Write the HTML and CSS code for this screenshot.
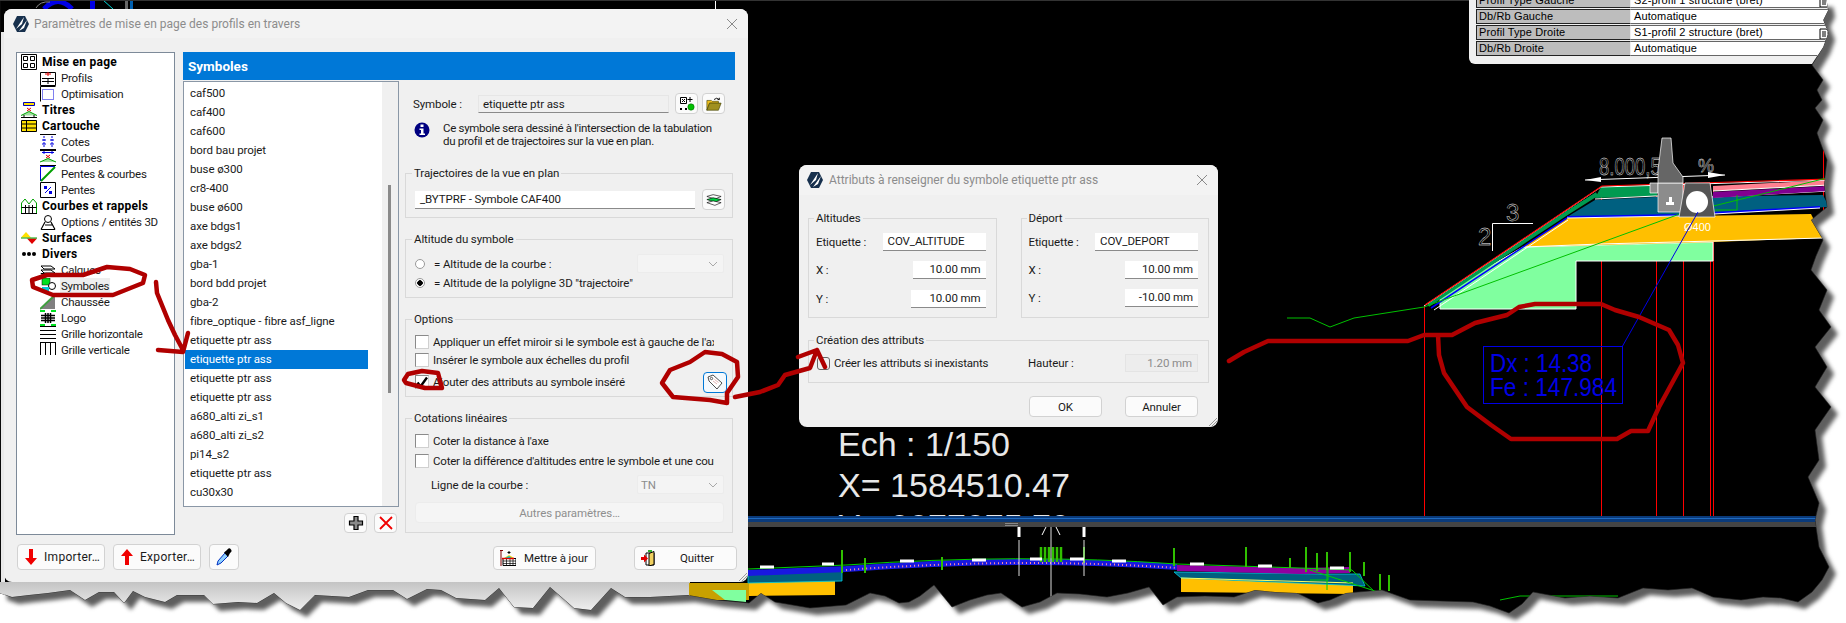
FILE: index.html
```html
<!DOCTYPE html>
<html lang="fr">
<head>
<meta charset="utf-8">
<title>Paramètres de mise en page</title>
<link rel="stylesheet" href="styles.css">
</head>
<body>
<svg class="cad" width="1846" height="623" viewBox="0 0 1846 623" xmlns="http://www.w3.org/2000/svg">
  <defs>
    <polygon id="tear" points="0,0 1826,0 1828,10 1823,20 1828,33 1823,47 1812,65 1823,80 1817,90 1822,100 1815,108 1823,120 1817,133 1822,147 1827,160 1824,185 1827,207 1811,220 1823,240 1816,256 1811,270 1827,290 1819,310 1831,327 1815,347 1827,367 1815,387 1831,407 1815,430 1819,460 1808,477 1819,503 1815,520 1819,547 1829,567 1822,580 1812,592 1798,602 1781,598 1763,597 1741,600 1713,597 1692,588 1668,590 1643,588 1618,598 1590,596 1565,598 1533,592 1522,604 1509,613 1490,606 1473,602 1440,601 1410,600 1382,590 1346,593 1330,600 1318,603 1297,593 1275,592 1255,590 1234,597 1205,596 1177,597 1163,605 1149,587 1128,593 1107,597 1080,594 1057,593 1040,602 1022,607 1001,593 987,595 970,600 952,607 934,585 920,596 909,602 899,603 885,596 870,593 846,605 810,608 775,602 761,593 749,603 717,600 688,595 650,597 625,597 611,588 591,610 574,608 550,587 533,608 514,607 499,588 485,600 456,598 441,590 427,589 407,599 393,590 368,590 349,597 315,595 300,610 286,603 274,593 257,603 238,602 213,604 204,595 177,595 165,602 145,597 133,591 124,603 114,592 99,592 85,600 70,590 48,593 29,595 12,597 0,593"/>
    <clipPath id="tearclip"><use href="#tear"/></clipPath>
    <clipPath id="yclip"><rect x="800" y="440" width="400" height="76"/></clipPath>
    <linearGradient id="shade" x1="0" y1="0" x2="0" y2="1">
      <stop offset="0" stop-color="#c4c4c4"/>
      <stop offset="1" stop-color="#f4f4f4"/>
    </linearGradient>
  </defs>
  <use href="#tear" class="tear-shadow"/>
  <use href="#tear" class="tear-fill"/>
  <g clip-path="url(#tearclip)">
    <rect x="1" y="32" width="4" height="570" fill="#e9e9e9"/>
    <rect x="0" y="582" width="690" height="32" fill="url(#shade)"/>

    <!-- fragments above the main window -->
    <path d="M44 9 Q58 -6 72 9" fill="none" stroke="#0000e6" stroke-width="5"/>
    <path d="M36 8 Q40 1 50 2" fill="none" stroke="#888" stroke-width="1"/>
    <rect x="90" y="0" width="5" height="9" fill="#0000e6"/>
    <path d="M103 0 L113 9" stroke="#00d8d8" stroke-width="1"/>
    <rect x="125" y="0" width="3" height="9" fill="#666"/>
    <rect x="130" y="0" width="3" height="9" fill="#0060b0"/>
    <rect x="715" y="0" width="1" height="9" fill="#fff"/>
    <rect x="0" y="0" width="1846" height="1" fill="#333"/>

    <!-- main profile -->
    <g fill="none" stroke="#f00" stroke-width="1">
      <path d="M1424.5 306V520M1601.5 187V520M1656.5 185V520M1683.5 183V520M1710.5 183V520M1713.5 190V520M1823.5 105V280"/>
    </g>
    <polygon points="1440,295 1440,309 1576,309 1576,261 1713,261 1713,242 1523,247" fill="#80ff9f" stroke="#fff" stroke-width="1"/>
    <polygon points="1523,247 1567,218 1811,214 1823,238 1713,242" fill="#ffbf00"/>
    <path d="M1523 247L1600 244L1713 241L1823 238" fill="none" stroke="#fff" stroke-width="1"/>
    <polygon points="1567,217 1595,200 1655,197 1823,195 1829,207 1679,215" fill="#006080"/>
    <path d="M1567 217L1679 215L1820 207" fill="none" stroke="#0000ff" stroke-width="2"/>
    <path d="M1567 218L1679 216L1820 208" fill="none" stroke="#fff" stroke-width="1"/>
    <polygon points="1595,198 1601,187 1657,184 1657,196" fill="#009a50"/>
    <path d="M1595 199L1655 196L1715 197L1829 191" fill="none" stroke="#fff" stroke-width="1"/>
    <polygon points="1713,192 1829,186 1829,191 1713,198" fill="#800090"/>
    <polygon points="1713,186 1829,180 1829,185 1713,191" fill="#ff8090"/>
    <path d="M1713 191L1829 185" stroke="#fff" stroke-width="1" fill="none"/>
    <path d="M1428 305L1567 213L1597 194" fill="none" stroke="#009a50" stroke-width="4"/>
    <path d="M1431 308L1567 218" fill="none" stroke="#0000ff" stroke-width="1.500"/>
    <path d="M1434 310L1568 220" fill="none" stroke="#fff" stroke-width="1"/>
    <path d="M1424 306L1601 187L1829 180" fill="none" stroke="#fff" stroke-width="1"/>
    <path d="M1425 305L1602 186L1829 179" fill="none" stroke="#f00" stroke-width="1.200"/>
    <path d="M1287 318H1310L1330 327L1354 318L1424 307L1677 215L1831 177" fill="none" stroke="#00c000" stroke-width="1"/>
    <path d="M1715 210H1737V195" fill="none" stroke="#00c000" stroke-width="1"/>

    <text x="1599" y="175" class="cad-dim" textLength="72" lengthAdjust="spacingAndGlyphs">8.000,50</text>
    <text x="1698" y="172" class="cad-dim-s">%</text>
    <path d="M1585 180L1725 175" stroke="#fff" stroke-width="1" fill="none"/>
    <path d="M1585 180L1601 177V182Z M1725 175L1708 172V178Z" fill="#fff"/>
    <text x="1506" y="221" class="cad-dim">3</text>
    <text x="1478" y="245" class="cad-dim">2</text>
    <path d="M1533 223.500H1492.500V251" stroke="#fff" fill="none"/>

    <!-- curb and pipe -->
    <polygon points="1650,183 1658,183 1658,193 1650,193" fill="#8c8c8c" stroke="#fff" stroke-width=".7"/>
    <polygon points="1658,183 1683,183 1683,212 1658,212" fill="#8c8c8c" stroke="#fff" stroke-width=".7"/>
    <path d="M1666 205h8v-3h-2v-5h-3v5h-3z" fill="#fff"/>
    <polygon points="1662,138 1671,138 1673,163 1683,177 1683,183 1658,183 1658,170" fill="#666" stroke="#fff" stroke-width=".7"/>
    <polygon points="1685,183 1710,183 1715,217 1679,217" fill="#555" stroke="#fff" stroke-width=".7"/>
    <ellipse cx="1697" cy="202" rx="11" ry="11" fill="#fff"/>
    <text x="1684" y="231" class="cad-pipe">Ø400</text>

    <!-- blue label -->
    <path d="M1698 212L1622 347" stroke="#0000e6" fill="none"/>
    <rect x="1483.500" y="346.500" width="139" height="57" fill="none" stroke="#0000e6"/>
    <text x="1490" y="372" class="cad-label" textLength="102" lengthAdjust="spacingAndGlyphs">Dx : 14.38</text>
    <text x="1490" y="396" class="cad-label" textLength="127" lengthAdjust="spacingAndGlyphs">Fe : 147.984</text>

    <!-- coordinates -->
    <text x="838" y="456" class="cad-coord" textLength="172" lengthAdjust="spacingAndGlyphs">Ech : 1/150</text>
    <text x="838" y="497" class="cad-coord" textLength="232" lengthAdjust="spacingAndGlyphs">X= 1584510.47</text>
    <g clip-path="url(#yclip)">
      <text x="838" y="538" class="cad-coord" textLength="232" lengthAdjust="spacingAndGlyphs">Y= 2277275.79</text>
    </g>

    <!-- pane splitter -->
    <rect x="740" y="516" width="1100" height="6" fill="#0a3a7a"/>
    <rect x="740" y="518" width="1100" height="1" fill="#1e6ac0"/>
    <rect x="740" y="522" width="1100" height="5" fill="#444"/>
    <rect x="1005" y="523" width="13" height="1" fill="#888"/>
    <rect x="1005" y="525" width="13" height="1" fill="#888"/>

    <!-- lower long section -->
    <polygon points="689,583 749,583 749,600 689,600" fill="#c8a000"/>
    <polygon points="749,582 835,580 835,595 749,596" fill="#ffbf00"/>
    <polygon points="1181,578 1353,585 1353,594 1181,592" fill="#ffbf00"/>
    <polygon points="712,590 746,590 746,602 725,600" fill="#80ff9f"/>
    <polygon points="748,574 842,570 842,581 748,583" fill="#006080" stroke="#00d0e0" stroke-width=".8"/>
    <polygon points="1174,572 1320,574 1360,574 1365,586 1181,578" fill="#006080" stroke="#00d0e0" stroke-width=".8"/>
    <path d="M748 573L846 569Q1020 556 1177 567" fill="none" stroke="#1818e0" stroke-width="6"/>
    <path d="M846 570Q1020 557 1177 568" fill="none" stroke="#ff90a0" stroke-width="2" stroke-dasharray="1 3"/>
    <path d="M1177 568L1300 571L1350 570" fill="none" stroke="#9000a0" stroke-width="6"/>
    <path d="M748 569L846 565Q1020 553 1177 564L1300 568L1352 570L1378 595" fill="none" stroke="#00d000" stroke-width="1"/>
    <path d="M1181 578L1353 583" fill="none" stroke="#ffff60" stroke-width="1"/>
    <path d="M1310 570L1378 592M1310 580H1328V570M1327 570V590" fill="none" stroke="#00d000" stroke-width="1"/>
    <path d="M842 550v23M865 558v15M942 557v13M1084 547v16M1174 548v18M1246 547v20M1290 558v10M1306 547v25M1317 553v18M1327 552v18M1350 552v20M1364 562v14M1380 574v18M1389 575v16" stroke="#30c000" stroke-width="2" fill="none"/>
    <path d="M1041 547v15M1045 547v15M1049 547v15M1053 547v15M1057 547v15M1061 547v15" stroke="#30c000" stroke-width="2.500" fill="none"/>
    <path d="M1019 527v10M1084 527v10" stroke="#fff" stroke-width="3" fill="none"/>
    <path d="M1019 540v36M1084 540v36M1051 527v100" stroke="#ddd" stroke-width="1" fill="none"/>
    <path d="M1046 527l-4 8M1056 527l4 8" stroke="#fff" stroke-width="1" fill="none"/>
    <path d="M760 567h14M822 564h12M900 561h14M972 560h14M1030 559h12M1070 559h14M1112 561h14M1190 564h14M1258 566h14M1330 568h14" stroke="#fff" stroke-width="3" fill="none"/>
    <path d="M1500 600L1520 596H1618" fill="none" stroke="#00c000" stroke-width="1"/>
  </g>
</svg>

<section class="win win-main">
  <header class="titlebar">
    <svg class="logo" viewBox="0 0 16 16"><path d="M4 0h8l4 8-4 8H4L0 8z" fill="#17304d"/><path d="M3 13L11 1L9 8ZM6 15L14 4L11 12Z" fill="#fff"/></svg>
    <span class="title">Paramètres de mise en page des profils en travers</span>
    <svg class="close" viewBox="0 0 12 12"><path d="M1 1L11 11M11 1L1 11" stroke="#8a8a8a" fill="none"/></svg>
  </header>
  <div class="main-body">
    <div class="left-col">
      <nav class="tree">
        <div class="node top"><svg class="ti" viewBox="0 0 16 16"><path d="M.5.500h15v15H.500z M2.500 2.500h4v4h-4z M9.500 2.500h4v4h-4z M2.500 9.500h4v4h-4z M9.500 9.500h4v4h-4z" fill="#fff" stroke="#000"/></svg><b>Mise en page</b></div>
        <div class="node sub"><svg class="ti" viewBox="0 0 16 16"><path d="M.5 2.500h15v13H.500z" fill="#fff" stroke="#000"/><path d="M2 8.500h12M2 11.500h12M8 8v6" stroke="#000"/><path d="M8 2v4M5 4h6" stroke="#e00000"/></svg><span>Profils</span></div>
        <div class="node sub"><svg class="ti" viewBox="0 0 16 16"><path d="M.5 15.500V.500h15" fill="none" stroke="#000"/><path d="M2.500 3.500h11v10h-11z" fill="none" stroke="#0000e0" stroke-dasharray="1 1"/></svg><span>Optimisation</span></div>
        <div class="node top"><svg class="ti" viewBox="0 0 16 16"><path d="M2.500.500h11v3h-11z" fill="#ffe000" stroke="#0000c0"/><path d="M6 6l4 3M10 6l-4 3" stroke="#e00000"/><path d="M0 13.500L8 9.500L16 13.500" fill="#9fe09f" stroke="#00a000"/><path d="M0 15.500h16M3 13v2M13 13v2" stroke="#000"/></svg><b>Titres</b></div>
        <div class="node top"><svg class="ti" viewBox="0 0 16 16"><path d="M.5 2.500h15v11H.500z" fill="#ffe000" stroke="#000"/><path d="M1 6h14M1 10h14M5.500 3v10" stroke="#000"/></svg><b>Cartouche</b></div>
        <div class="node sub"><svg class="ti" viewBox="0 0 16 16"><path d="M0 .5h16M0 15.500h16" stroke="#000"/><path d="M4 2v11M12 2v11" stroke="#0000e0" stroke-dasharray="2 1"/><path d="M2 6h4M10 6h4M2 10h4M10 10h4" stroke="#0000e0"/></svg><span>Cotes</span></div>
        <div class="node sub"><svg class="ti" viewBox="0 0 16 16"><path d="M0 .5h16M0 15.500h16" stroke="#000"/><path d="M2 2.500h12M4 1v3M12 1v3" stroke="#0000e0"/><path d="M6 5l4 3M10 5l-4 3" stroke="#e00000"/><path d="M0 12L8 8.500L16 12" fill="#9fe09f" stroke="#00a000"/></svg><span>Courbes</span></div>
        <div class="node sub"><svg class="ti" viewBox="0 0 16 16"><path d="M.5 15V.500H15" fill="none" stroke="#0000e0"/><path d="M1 15L15 1" stroke="#00a000" stroke-width="2"/></svg><span>Pentes &amp; courbes</span></div>
        <div class="node sub"><svg class="ti" viewBox="0 0 16 16"><path d="M.5.500h15v15H.500z" fill="#fff" stroke="#000"/><path d="M5 11L11 5" stroke="#0000e0"/><path d="M4 4h3v3h-3zM9 9h3v3h-3z" fill="#0000e0"/></svg><span>Pentes</span></div>
        <div class="node top"><svg class="ti" viewBox="0 0 16 16"><path d="M.5 15V5L4 1l4 5 4-5 3.500 4v10" fill="none" stroke="#00a000"/><path d="M.5 9.500h15M4.500 7v8M8 7v8M11.500 7v8" stroke="#000"/><path d="M0 15.500h16" stroke="#000"/></svg><b>Courbes et rappels</b></div>
        <div class="node sub"><svg class="ti" viewBox="0 0 16 16"><circle cx="8" cy="5" r="3.500" fill="none" stroke="#000"/><path d="M1 15.500h14M1 15.500L5 8M15 15.500L11 8M5 11h7" fill="none" stroke="#000" stroke-width="1.200"/></svg><span>Options / entités 3D</span></div>
        <div class="node top"><svg class="ti" viewBox="0 0 16 16"><path d="M0 7.500L5 2L10 7.500Z" fill="#ffe000"/><path d="M6 8.500h10L11 14Z" fill="#e00000"/><path d="M0 8h16" stroke="#00a000"/></svg><b>Surfaces</b></div>
        <div class="node top"><svg class="ti" viewBox="0 0 16 16"><circle cx="3" cy="8" r="2"/><circle cx="8" cy="8" r="2"/><circle cx="13" cy="8" r="2"/></svg><b>Divers</b></div>
        <div class="node sub"><svg class="ti" viewBox="0 0 16 16"><path d="M1 4h10l4 3H4zM1 8h10l4 3H4zM1 11.500h10l4 3H4z" fill="#fff" stroke="#000"/></svg><span>Calques</span></div>
        <div class="node sub"><svg class="ti" viewBox="0 0 16 16"><rect x="2" y="0" width="8" height="7" fill="#00e020" stroke="#000" stroke-width=".5"/><circle cx="12" cy="8" r="3.500" fill="#fff" stroke="#000"/><rect x="2" y="9" width="7" height="6" fill="#00c8d8"/></svg><span class="hl">Symboles</span></div>
        <div class="node sub"><svg class="ti" viewBox="0 0 16 16"><path d="M0 15L15 1V15Z" fill="#808080"/><path d="M0 15L15 1" stroke="#3f9f3f" stroke-width="2"/></svg><span>Chaussée</span></div>
        <div class="node sub"><svg class="ti" viewBox="0 0 16 16"><path d="M0 1h5M11 1h5M0 15h5M11 15h5" stroke="#00e020" stroke-width="2"/><path d="M1 5.500h14M1 8h14M1 10.500h14M5.500 3v10M8 3v10M10.500 3v10" stroke="#000" stroke-width="1.500"/></svg><span>Logo</span></div>
        <div class="node sub"><svg class="ti" viewBox="0 0 16 16"><path d="M0 .5h16M0 4.500h16M0 8.500h16M0 12.500h16" stroke="#000"/></svg><span>Grille horizontale</span></div>
        <div class="node sub"><svg class="ti" viewBox="0 0 16 16"><path d="M.5 0v13M5.500 0v13M10.500 0v13M15.500 0v13" stroke="#000"/><path d="M0 .5h16" stroke="#000"/></svg><span>Grille verticale</span></div>
      </nav>
      <div class="tools">
        <button class="btn btn-io"><svg class="bi" viewBox="0 0 12 16"><path d="M4 0h4v9h4l-6 7-6-7h4z" fill="#f00000"/></svg><span>Importer…</span></button>
        <button class="btn btn-io"><svg class="bi" viewBox="0 0 12 16"><path d="M4 16h4V7h4L6 0 0 7h4z" fill="#f00000"/></svg><span>Exporter…</span></button>
        <button class="btn btn-drop"><svg class="bi-drop" viewBox="0 0 16 18"><path d="M1 17L2 13L9 5L12 8L5 15Z" fill="#8fd0ff" stroke="#0030c0"/><path d="M8 4.500L11 2Q13 -1 15 1.500Q16.500 3.500 14 5L12 9Z" fill="#000"/></svg></button>
      </div>
    </div>
    <div class="right-col">
      <h1 class="section-head">Symboles</h1>
      <div class="split">
        <div class="list-col">
          <div class="list">
            <ul class="rows">
              <li>caf500</li><li>caf400</li><li>caf600</li><li>bord bau projet</li><li>buse ø300</li><li>cr8-400</li><li>buse ø600</li><li>axe bdgs1</li><li>axe bdgs2</li><li>gba-1</li><li>bord bdd projet</li><li>gba-2</li><li>fibre_optique - fibre asf_ligne</li><li>etiquette ptr ass</li><li class="sel">etiquette ptr ass</li><li>etiquette ptr ass</li><li>etiquette ptr ass</li><li>a680_alti zi_s1</li><li>a680_alti zi_s2</li><li>pi14_s2</li><li>etiquette ptr ass</li><li>cu30x30</li>
            </ul>
            <div class="scroll"><div class="thumb"></div></div>
          </div>
          <div class="list-actions">
            <button class="btn btn-sq"><svg class="bi-lg" viewBox="0 0 16 16"><path d="M6 1.500h4v4.500h4.500v4H10v4.500H6V10H1.500V6H6z" fill="#8a8a8a" stroke="#000" stroke-width="1.200"/></svg></button>
            <button class="btn btn-sq"><svg class="bi-lg" viewBox="0 0 16 16"><path d="M2 2L14 14M14 2L2 14" stroke="#f00000" stroke-width="1.800"/></svg></button>
          </div>
        </div>
        <div class="settings">
          <div class="symbol-row">
            <span class="symbol-label">Symbole :</span>
            <div class="field field-ro">etiquette ptr ass</div>
            <button class="btn btn-icon"><svg class="bi-lg" viewBox="0 0 16 16"><path d="M1.500 1.500h6v6h-6z" fill="#fff" stroke="#000"/><path d="M3 3l3 3M6 3L3 6" stroke="#000"/><path d="M11 1v5M8.500 3.500h5" stroke="#000"/><circle cx="12" cy="11" r="3.200" fill="#00c000" stroke="#006000" stroke-width=".5"/><rect x="1" y="12" width="2" height="2"/><rect x="6" y="12" width="2" height="2"/></svg></button>
            <button class="btn btn-icon"><svg class="bi-lg" viewBox="0 0 18 16"><path d="M1 4h5l1 1h7v2H4l-3 8z" fill="#f0c020" stroke="#404000" stroke-width=".7"/><path d="M1 15L4 7h13l-3 8z" fill="#a09020" stroke="#404000" stroke-width=".7"/><path d="M9 3q3-3 6 0M15 3V1M15 3h-2" fill="none" stroke="#000"/></svg></button>
          </div>
          <div class="info-row">
            <svg class="info-ico" viewBox="0 0 16 16"><circle cx="8" cy="8" r="7.500" fill="#000080"/><rect x="6.500" y="2.500" width="3" height="2.500" fill="#fff"/><path d="M5.500 6.500h4v5h1.500v1.500H5.500v-1.500H7V8H5.500z" fill="#fff"/></svg>
            <p class="info-text">Ce symbole sera dessiné à l'intersection de la tabulation<br>du profil et de trajectoires sur la vue en plan.</p>
          </div>
          <div class="groups">
            <fieldset class="grp grp-traj">
              <legend>Trajectoires de la vue en plan</legend>
              <div class="traj-row">
                <div class="field field-traj">_BYTPRF - Symbole CAF400</div>
                <button class="btn btn-icon"><svg class="bi-lg" viewBox="0 0 18 14"><path d="M1 3l7-2 9 2-7 3z" fill="#fff" stroke="#000" stroke-width=".7"/><path d="M1 6.500l7-2 9 2-7 3z" fill="#00d040" stroke="#000" stroke-width=".7"/><path d="M1 10l7-2 9 2-7 3z" fill="#fff" stroke="#000" stroke-width=".7"/></svg></button>
              </div>
            </fieldset>
            <fieldset class="grp grp-alt">
              <legend>Altitude du symbole</legend>
              <div class="alt-row">
                <span class="radio"></span><span class="opt">= Altitude de la courbe :</span>
                <div class="combo combo-push"><svg class="chev" viewBox="0 0 10 6"><path d="M1 1l4 4 4-4" fill="none" stroke="#a8a8a8"/></svg></div>
              </div>
              <div class="alt-row">
                <span class="radio on"></span><span class="opt">= Altitude de la polyligne 3D "trajectoire"</span>
              </div>
            </fieldset>
            <fieldset class="grp grp-opt">
              <legend>Options</legend>
              <label class="chk-row"><span class="chk"></span><span class="chk-text">Appliquer un effet miroir si le symbole est à gauche de l'axe</span></label>
              <label class="chk-row"><span class="chk"></span><span class="chk-text">Insérer le symbole aux échelles du profil</span></label>
              <div class="chk-row chk-last">
                <span class="chk"><svg class="tick" viewBox="0 0 12 12"><path d="M1.500 6.500L4.500 10.500L11 1.500" fill="none" stroke="#000" stroke-width="2.400"/></svg></span>
                <span class="chk-text chk-grow">Ajouter des attributs au symbole inséré</span>
                <button class="btn btn-tag"><svg class="bi-lg" viewBox="0 0 16 16"><path d="M1 3l5-2 9 8-5 6-8-8z" fill="#fff" stroke="#222" stroke-width=".8"/><circle cx="4.500" cy="4.500" r="1.200" fill="none" stroke="#222" stroke-width=".7"/><path d="M6 7l4 3M7.500 5.500l4 3" stroke="#d8a0a0" stroke-width=".8"/></svg></button>
              </div>
            </fieldset>
            <fieldset class="grp grp-cot">
              <legend>Cotations linéaires</legend>
              <label class="chk-row chk-roomy"><span class="chk"></span><span class="chk-text">Coter la distance à l'axe</span></label>
              <label class="chk-row chk-roomy"><span class="chk"></span><span class="chk-text">Coter la différence d'altitudes entre le symbole et une courbe</span></label>
              <div class="line-row">
                <span class="line-label">Ligne de la courbe :</span>
                <div class="combo"><span class="combo-val">TN</span><svg class="chev" viewBox="0 0 10 6"><path d="M1 1l4 4 4-4" fill="none" stroke="#a8a8a8"/></svg></div>
              </div>
              <button class="btn btn-other">Autres paramètres…</button>
            </fieldset>
          </div>
          <div class="foot-actions">
            <button class="btn btn-foot btn-update"><svg class="bi-lg" viewBox="0 0 16 16"><path d="M0 .5h3M1 0v16" stroke="#800000"/><path d="M3 8.500h13v7H3z" fill="#fff" stroke="#000"/><path d="M3 11h13M3 13.500h13M6.500 8v8M10 8v8M13 8v8" stroke="#000" stroke-width=".7"/><path d="M4 8L9 5l5 3z" fill="#ffd800"/><path d="M5 8l4-2 3 2z" fill="#00c0d0"/><path d="M2 8.500h12" stroke="#e00000" stroke-width="1.400"/><path d="M9 1v3M7.500 2.500h3" stroke="#000"/></svg><span>Mettre à jour</span></button>
            <button class="btn btn-foot btn-quit"><svg class="bi-lg" viewBox="0 0 16 16"><path d="M5 3h8v12H5z" fill="#fff" stroke="#000"/><path d="M8 3.500l5-2v13l-5 1.500z" fill="#f0d060" stroke="#000"/><rect x="7" y="0" width="4" height="2" fill="#30b030"/><path d="M0 7h3V4.500L7 8.500 3 12.500V10H0z" fill="#e00000"/></svg><span class="quit-label">Quitter</span></button>
          </div>
        </div>
      </div>
    </div>
  </div>
  <svg class="grip" viewBox="0 0 10 10"><path d="M9 1L1 9M9 4L4 9M9 7L7 9" stroke="#999" fill="none"/></svg>
</section>

<section class="win win-attr">
  <header class="titlebar titlebar-attr">
    <svg class="logo" viewBox="0 0 16 16"><path d="M4 0h8l4 8-4 8H4L0 8z" fill="#17304d"/><path d="M3 13L11 1L9 8ZM6 15L14 4L11 12Z" fill="#fff"/></svg>
    <span class="title">Attributs à renseigner du symbole etiquette ptr ass</span>
    <svg class="close" viewBox="0 0 12 12"><path d="M1 1L11 11M11 1L1 11" stroke="#8a8a8a" fill="none"/></svg>
  </header>
  <div class="attr-body">
    <div class="attr-pair">
      <fieldset class="grp grp-attr">
        <legend>Altitudes</legend>
        <div class="attr-row"><span>Etiquette :</span><div class="field f-name">COV_ALTITUDE</div></div>
        <div class="attr-row"><span>X :</span><div class="field f-num">10.00 mm</div></div>
        <div class="attr-row attr-row-y"><span>Y :</span><div class="field f-num f-wide">10.00 mm</div></div>
      </fieldset>
      <fieldset class="grp grp-attr">
        <legend>Déport</legend>
        <div class="attr-row"><span>Etiquette :</span><div class="field f-name">COV_DEPORT</div></div>
        <div class="attr-row"><span>X :</span><div class="field f-num">10.00 mm</div></div>
        <div class="attr-row"><span>Y :</span><div class="field f-num">-10.00 mm</div></div>
      </fieldset>
    </div>
    <fieldset class="grp grp-create">
      <legend>Création des attributs</legend>
      <div class="create-row">
        <div class="create-left"><span class="chk chk-round"></span><span>Créer les attributs si inexistants</span></div>
        <div class="create-right"><span>Hauteur :</span><div class="field f-num f-off">1.20 mm</div></div>
      </div>
    </fieldset>
    <div class="attr-actions">
      <button class="btn btn-dlg">OK</button>
      <button class="btn btn-dlg">Annuler</button>
    </div>
  </div>
  <svg class="grip" viewBox="0 0 10 10"><path d="M9 1L1 9M9 4L4 9M9 7L7 9" stroke="#999" fill="none"/></svg>
</section>

<section class="win-props">
  <div class="prop"><span class="prop-k">Profil Type Gauche</span><span class="prop-v">S2-profil 1 structure (bret)<svg class="prop-ico" viewBox="0 0 10 12"><path d="M1 2h6l2 2v8H1z" fill="#fff" stroke="#000"/><path d="M3 5h4M3 7h4M3 9h4" stroke="#000"/></svg></span></div>
  <div class="prop"><span class="prop-k">Db/Rb Gauche</span><span class="prop-v">Automatique</span></div>
  <div class="prop"><span class="prop-k">Profil Type Droite</span><span class="prop-v">S1-profil 2 structure (bret)<svg class="prop-ico" viewBox="0 0 10 12"><path d="M1 2h6l2 2v8H1z" fill="#fff" stroke="#000"/><path d="M3 5h4M3 7h4M3 9h4" stroke="#000"/></svg></span></div>
  <div class="prop"><span class="prop-k">Db/Rb Droite</span><span class="prop-v">Automatique</span></div>
</section>

<svg class="ink" width="1846" height="623" viewBox="0 0 1846 623" xmlns="http://www.w3.org/2000/svg">
  <g fill="none" stroke="#b00000" stroke-width="4.500" stroke-linejoin="round" stroke-linecap="round">
    <path d="M1229 361L1244 352L1268 341H1408L1424 335H1452L1475 323L1507 315L1519 307L1535 304H1601L1615 310L1639 317L1669 330L1678 345L1683 363L1671 385L1659 407L1648 431H1631L1617 439H1511L1491 425L1467 407L1444 373L1439 355L1438 335"/>
    <path d="M735 397L760 392L778 385L785 375L810 368L817 350M798 357L817 350L825 367"/>
    <path d="M705 352L722 354L737 362L738 377L727 393L727 403L710 400L673 397L662 383L670 370L690 362Z"/>
    <path d="M404 380L408 374L422 371L438 373L442 388L425 388L406 383Z"/>
    <path d="M32 280L47 275H83L107 267L130 269L145 275L143 283L113 295H53L33 287Z"/>
    <path d="M156 282L157 293L168 320L175 335L183 350M188 333L183 352L158 350"/>
  </g>
</svg>
</body>
</html>
```

FILE: styles.css
```css
* { box-sizing: border-box; }
html, body { margin: 0; padding: 0; }
body {
  width: 1846px;
  height: 623px;
  overflow: hidden;
  position: relative;
  background: #fff;
  font: 11.5px/16px Roboto, "Noto Sans", "Liberation Sans", sans-serif;
  letter-spacing: -.1px;
  color: #1a1a1a;
}
p, h1, ul { margin: 0; padding: 0; }
ul { list-style: none; }
button { font: inherit; color: inherit; padding: 0; letter-spacing: inherit; }

/* free canvas */
.cad, .ink { position: absolute; left: 0; top: 0; }
.ink { pointer-events: none; z-index: 5; }
.tear-shadow { fill: #5e5e5e; transform: translate(7px, 7px); filter: blur(2px); }
.tear-fill { fill: #000; stroke: #222; stroke-width: .6; }
.cad-coord { font: 34px "Liberation Sans", sans-serif; fill: #e8e8e8; letter-spacing: 0; }
.cad-label { font: 25px "Liberation Sans", sans-serif; fill: #0000e6; letter-spacing: 0; }
.cad-dim { font: 24px "Liberation Sans", sans-serif; fill: none; stroke: #fff; stroke-width: .4; letter-spacing: 0; }
.cad-dim-s { font: 18px "Liberation Sans", sans-serif; fill: none; stroke: #fff; stroke-width: .4; letter-spacing: 0; }
.cad-pipe { font: 11px "Liberation Sans", sans-serif; fill: #fff; letter-spacing: 0; }

/* windows */
.win {
  position: absolute;
  background: #f0f0f0;
  border-radius: 8px;
  overflow: hidden;
  z-index: 2;
}
.win-main { left: 4px; top: 9px; width: 744px; height: 573px; }
.win-attr { left: 799px; top: 165px; width: 419px; height: 262px; }
.titlebar {
  height: 29px;
  display: flex;
  align-items: center;
  padding: 0 10px 0 9px;
  background: #f3f3f3;
  gap: 5px;
}
.titlebar-attr { height: 30px; padding-left: 8px; gap: 6px; }
.logo { width: 16px; height: 16px; flex: none; }
.title { flex: 1; color: #8c8c8c; font-size: 12px; letter-spacing: 0; }
.close { width: 12px; height: 12px; flex: none; }
.grip { position: absolute; right: 0; bottom: 0; width: 10px; height: 10px; }

/* main window */
.main-body {
  display: grid;
  grid-template-columns: 159px 552px;
  column-gap: 8px;
  padding: 14px 0 0 12px;
}
.left-col { display: flex; flex-direction: column; }
.tree {
  height: 483px;
  background: #fff;
  border: 1px solid #7d8a99;
  padding-top: 1px;
  padding-left: 4px;
}
.node { height: 16px; display: flex; align-items: center; white-space: nowrap; }
.node .ti { width: 16px; height: 16px; flex: none; margin-right: 5px; }
.node.sub { padding-left: 19px; }
.node b { font-size: 12px; font-weight: 700; color: #000; letter-spacing: .25px; }
.node span { letter-spacing: -.25px; }
.hl { background: #eee; padding: 0 1px; margin-left: -1px; }
.tools { display: flex; gap: 8px; margin-top: 9px; padding-left: 1px; }
.btn {
  background: #fbfbfb;
  border: 1px solid #d2d2d2;
  border-radius: 4px;
  display: flex;
  align-items: center;
  white-space: nowrap;
  flex: none;
}
.btn-io { width: 88px; height: 26px; padding-left: 7px; gap: 7px; font-size: 12px; letter-spacing: .3px; }
.bi { width: 12px; height: 16px; flex: none; }
.bi-lg { width: 16px; height: 16px; flex: none; }
.bi-drop { width: 16px; height: 18px; flex: none; }
.btn-drop { width: 30px; height: 26px; justify-content: center; }

.section-head {
  height: 28px;
  background: #0078d7;
  color: #fff;
  font-size: 13.5px;
  font-weight: 700;
  line-height: 28px;
  padding-left: 5px;
  letter-spacing: 0;
}
.split { display: flex; }
.list-col { width: 216px; flex: none; margin-top: 1px; }
.list {
  height: 426px;
  background: #fff;
  border: 1px solid #8a97a6;
  display: flex;
  padding-left: 1px;
  overflow: hidden;
}
.rows { flex: 1; padding-top: 2px; margin-right: 14px; }
.rows li { height: 19px; line-height: 19px; padding-left: 5px; white-space: nowrap; }
.rows li.sel { background: #0078d7; color: #fff; }
.scroll { width: 16px; flex: none; background: #f0f0f0; padding: 103px 0 0 6px; }
.thumb { width: 3px; height: 208px; background: #8a8a8a; }
.list-actions { display: flex; justify-content: flex-end; gap: 7px; margin-top: 6px; padding-right: 2px; }
.btn-sq { width: 23px; height: 20px; justify-content: center; }

.settings { width: 332px; margin-left: 6px; flex: none; padding-top: 13px; }
.symbol-row { display: flex; align-items: center; height: 21px; padding-left: 8px; }
.symbol-label { width: 65px; flex: none; }
.field {
  background: #fff;
  border-bottom: 1px solid #8a8a8a;
  height: 18px;
  line-height: 17px;
  padding: 0 5px;
  white-space: nowrap;
  flex: none;
}
.field-ro { width: 191px; background: #f0f0f0; border: 1px solid #e6e6e6; border-bottom-color: #8a8a8a; padding-left: 4px; margin-right: 6px; }
.btn-icon { width: 23px; height: 21px; justify-content: center; }
.btn-icon + .btn-icon { margin-left: 4px; }
.info-row { display: flex; padding: 8px 0 0 9px; height: 51px; }
.info-ico { width: 16px; height: 16px; flex: none; margin: 0 13px 0 0; }
.info-text { line-height: 13px; white-space: nowrap; letter-spacing: -.3px; }
.groups { display: flex; flex-direction: column; gap: 13px; width: 328px; }
.grp { margin: 0; padding: 0; border: 1px solid #d9d9d9; min-width: 0; }
.grp legend { margin-left: -3px; padding: 0 2px; line-height: 16px; }
.grp-traj { height: 53px; padding: 8px 7px 0 9px; }
.traj-row { display: flex; align-items: center; justify-content: space-between; }
.field-traj { width: 280px; }
.grp-alt { height: 67px; padding: 7px 8px 0 9px; }
.alt-row { display: flex; align-items: center; height: 19px; }
.radio { width: 10px; height: 10px; border-radius: 50%; background: #fff; border: 1px solid #9a9a9a; margin-right: 9px; flex: none; }
.radio.on { background: radial-gradient(circle, #000 0 2.5px, #fff 3px); }
.opt { white-space: nowrap; }
.combo { width: 87px; height: 19px; background: #f4f4f4; border: 1px solid #ececec; border-radius: 2px; display: flex; align-items: center; padding: 0 5px 0 3px; flex: none; }
.combo-push { margin-left: auto; }
.combo-val { flex: 1; color: #8c8c8c; }
.chev { width: 10px; height: 6px; margin-left: auto; flex: none; }
.grp-opt { height: 86px; padding: 6px 5px 0 9px; }
.chk-row { display: flex; align-items: center; height: 18px; }
.chk-last { height: 24px; margin-top: 1px; }
.chk { width: 14px; height: 14px; background: #fff; border: 1px solid #8a8a8a; border-right-color: #d0d0d0; border-bottom-color: #d0d0d0; flex: none; margin-right: 4px; display: flex; align-items: center; justify-content: center; }
.tick { width: 12px; height: 12px; flex: none; }
.chk-text { white-space: nowrap; overflow: hidden; width: 281px; flex: none; letter-spacing: -.2px; }
.chk-grow { width: auto; flex: 1; }
.btn-tag { width: 24px; height: 21px; justify-content: center; border: 1px solid #0078d7; background: #f4f9fd; }
.grp-cot { height: 123px; padding: 5px 0 0 9px; }
.chk-roomy { height: 20px; }
.line-row { display: flex; align-items: center; justify-content: space-between; height: 19px; margin-top: 4px; padding: 0 8px 0 16px; }
.btn-other { width: 309px; height: 21px; margin-top: 8px; justify-content: center; color: #8f8f8f; background: #f5f5f5; border-color: #ececec; }
.foot-actions { display: flex; justify-content: flex-end; gap: 38px; margin-top: 13px; }
.btn-foot { width: 103px; height: 24px; padding-left: 6px; }
.btn-update { gap: 8px; }
.quit-label { margin-left: 23px; }

/* attribute dialog */
.attr-body { padding: 15px 9px 0; }
.attr-pair { display: flex; gap: 24px; }
.grp-attr { width: 189px; height: 108px; padding: 7px 10px 0 7px; display: flex; flex-direction: column; }
.grp-attr legend { margin-left: -2px; }
.attr-row { display: flex; justify-content: space-between; align-items: center; height: 18px; margin-bottom: 10px; white-space: nowrap; }
.attr-row-y { margin-top: 1px; }
.f-name { width: 103px; }
.f-num { width: 73px; text-align: right; }
.f-wide { width: 75px; }
.grp-create { height: 51px; margin-top: 14px; padding: 6px 10px 0 8px; }
.create-row { display: flex; justify-content: space-between; align-items: center; }
.create-left { display: flex; align-items: center; white-space: nowrap; letter-spacing: -.2px; }
.chk-round { width: 13px; height: 13px; background: transparent; border: 1px solid #666; border-radius: 3px; }
.create-right { display: flex; align-items: center; justify-content: space-between; width: 170px; }
.f-off { background: #ededed; border: 1px solid #e4e4e4; color: #8c8c8c; }
.attr-actions { display: flex; justify-content: flex-end; gap: 23px; margin-top: 13px; padding-right: 11px; }
.btn-dlg { width: 73px; height: 21px; justify-content: center; }

/* property panel */
.win-props {
  position: absolute;
  left: 1469px;
  top: 0;
  width: 366px;
  height: 64px;
  z-index: 1;
  background: #f0f0f0;
  border-bottom-left-radius: 6px;
  padding: 0 0 0 7px;
  overflow: hidden;
  font: 11px/14px "Liberation Sans", Arial, sans-serif;
  letter-spacing: .12px;
  color: #000;
  clip-path: polygon(0 0, 357px 0, 359px 10px, 354px 20px, 359px 33px, 354px 47px, 343px 64px, 0 64px);
}
.prop { display: flex; height: 16px; }
.prop:first-child { margin-top: -7px; }
.prop-k { width: 155px; height: 15px; background: #bdbdbd; border: 1px solid #222; border-right-color: #eee; padding-left: 2px; line-height: 13px; flex: none; }
.prop-v { flex: 1; height: 15px; background: #fff; border-top: 1px solid #666; border-bottom: 1px solid #666; padding-left: 3px; line-height: 13px; position: relative; }
.prop-ico { position: absolute; left: 188px; top: 1px; width: 10px; height: 12px; }
```
